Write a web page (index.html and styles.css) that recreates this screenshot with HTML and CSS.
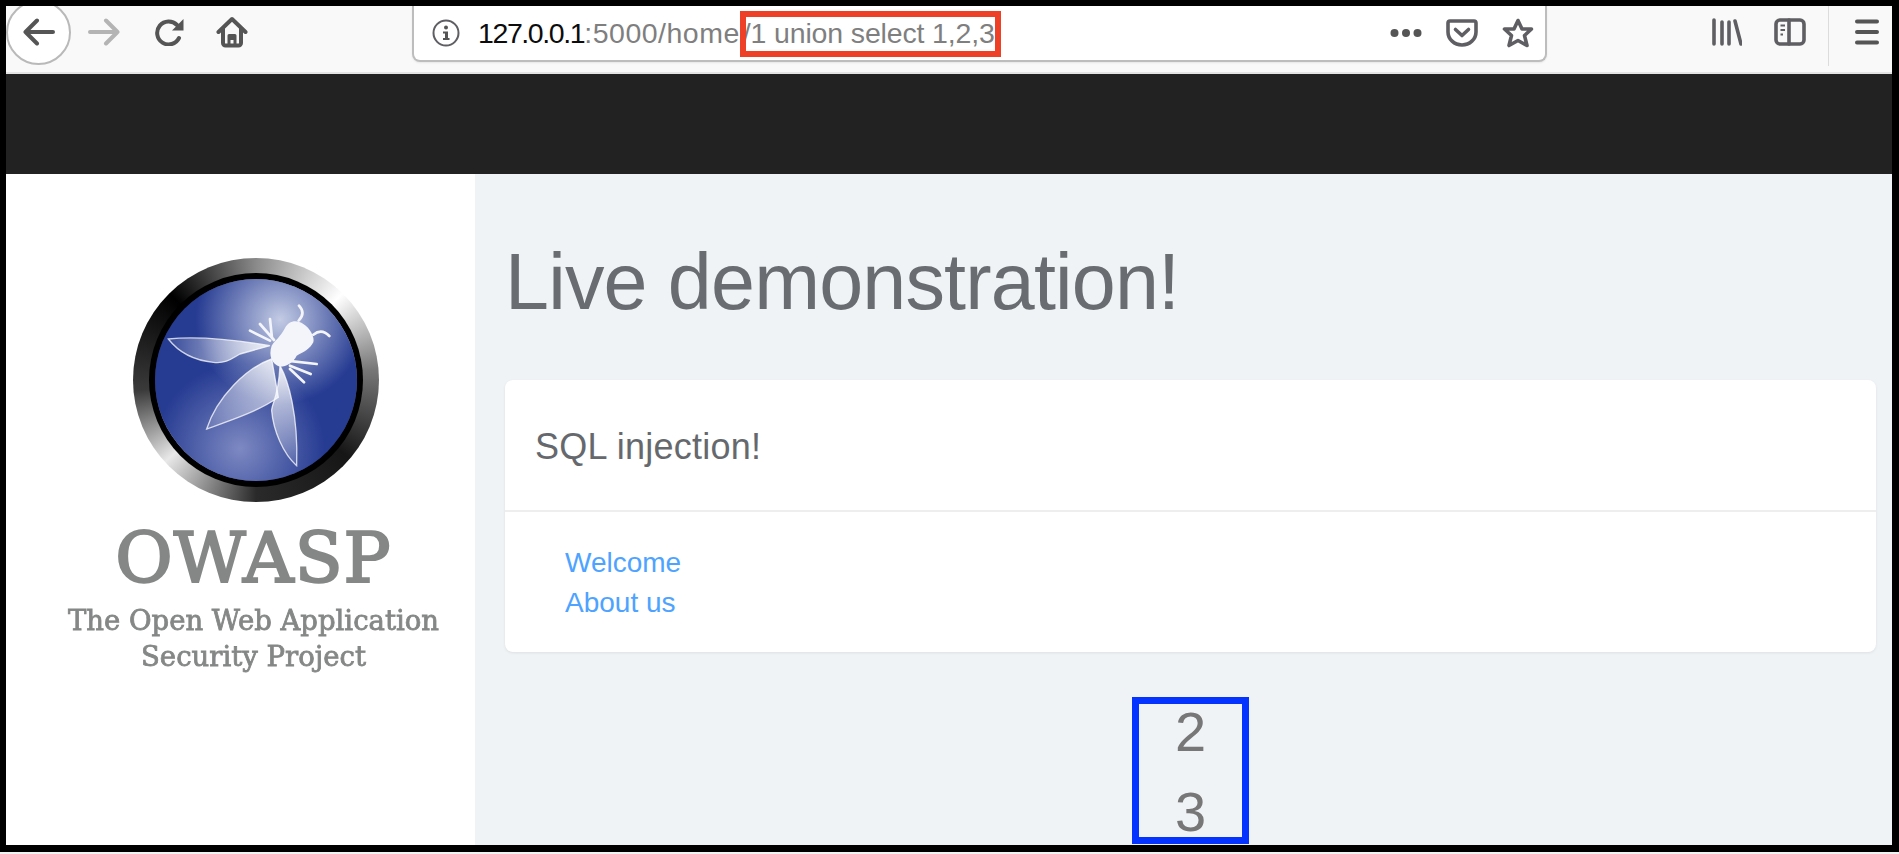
FILE: index.html
```html
<!DOCTYPE html>
<html lang="en">
<head>
	<meta charset="UTF-8">
	<title>Live demonstration!</title>
	<link rel="stylesheet" href="styles.css">
</head>
<body>
	<div class="frame">
		<div class="toolbar">
			<div class="back">
				<svg width="32" height="28" viewBox="0 0 32 28"><path class="ico" d="M2.5 14H30M14 2.5L2.5 14L14 25.5"/></svg>
			</div>
			<svg class="forward" width="32" height="28" viewBox="0 0 32 28"><path class="ico ico-off" d="M29.5 14H2M18 2.5L29.5 14L18 25.5"/></svg>
			<svg class="reload" width="30" height="28" viewBox="0 0 30 28"><path class="ico" d="M23 7A11.5 11.5 0 1 0 25 20"/><path class="solid" d="M29.5 1V12.5H18Z"/></svg>
			<svg class="home" width="32" height="32" viewBox="0 0 32 32"><path class="ico" d="M2.5 16L16 3L29.5 16M7 12V27a2.500 2.500 0 0 0 2.500 2.500H22.500A2.500 2.500 0 0 0 25 27V12"/><path class="solid" d="M11.500 29V19.500a1.500 1.500 0 0 1 1.500-1.500H19a1.500 1.500 0 0 1 1.500 1.500V29H17.500V24H14.500V29Z"/></svg>

			<div class="urlbar">
				<svg class="info" width="28" height="28" viewBox="0 0 28 28"><circle class="thin" cx="14" cy="14" r="12.500"/><circle class="solid" cx="14" cy="8.500" r="2"/><path class="solid" d="M11 12.500H16V19H17.500V21H11V19H13V14.500H11Z"/></svg>
				<div class="address"><span class="host">127.0.0.1</span><span class="path">:5000/home</span><span class="query">/1 union select 1,2,3</span></div>
				<svg class="dots" width="32" height="10" viewBox="0 0 32 10"><circle class="solid" cx="4.500" cy="5" r="4"/><circle class="solid" cx="16" cy="5" r="4"/><circle class="solid" cx="27.500" cy="5" r="4"/></svg>
				<svg class="pocket" width="32" height="28" viewBox="0 0 32 28"><path class="ico ico-thin" d="M4 2H28a2 2 0 0 1 2 2V13A14 13 0 0 1 2 13V4A2 2 0 0 1 4 2Z"/><path class="ico ico-thin" d="M9.500 10.500L16 16.500L22.500 10.500"/></svg>
				<svg class="star" width="32" height="30" viewBox="0 0 32 30"><path class="ico ico-thin" d="M16 2.500L20 11H29.500L22.500 17.500L25 27.500L16 22.500L7 27.500L9.500 17.500L2.500 11H12Z"/></svg>
			</div>

			<svg class="library" width="30" height="28" viewBox="0 0 30 28"><path class="ico ico-thin" d="M2 2V26M10 4V26M17 4V26M23 3L29 26"/></svg>
			<svg class="sidebar-ico" width="32" height="28" viewBox="0 0 32 28"><rect class="thin thick" x="2" y="2" width="28" height="24" rx="4"/><path class="ico ico-thin" d="M15 2V26"/><path class="ico ico-dash" d="M6.500 7.500H11M6.500 12H11M6.500 16.500H9"/></svg>
			<div class="tool-sep"></div>
			<svg class="menu" width="24" height="26" viewBox="0 0 24 26"><path class="ico" d="M2 2.500H22M2 13H22M2 23.500H22"/></svg>
		</div>

		<div class="navbar"></div>

		<div class="page">
			<div class="sidebar">
				<div class="logo">
					<svg width="202" height="202" viewBox="165 115 606 606">
						<defs>
							<radialGradient id="glow1" cx="0.62" cy="0.2" r="0.42">
								<stop offset="0" stop-color="#c3cbe4"/>
								<stop offset="1" stop-color="#c3cbe4" stop-opacity="0"/>
							</radialGradient>
							<radialGradient id="glow2" cx="0.42" cy="0.84" r="0.42">
								<stop offset="0" stop-color="#7d89c2"/>
								<stop offset="1" stop-color="#7d89c2" stop-opacity="0"/>
							</radialGradient>
							<linearGradient id="wing1" x1="0" y1="0" x2="1" y2="0">
								<stop offset="0" stop-color="#fff" stop-opacity="0.08"/>
								<stop offset="1" stop-color="#fff" stop-opacity="0.85"/>
							</linearGradient>
							<linearGradient id="wing2" x1="0" y1="1" x2="1" y2="0">
								<stop offset="0" stop-color="#fff" stop-opacity="0.08"/>
								<stop offset="1" stop-color="#fff" stop-opacity="0.85"/>
							</linearGradient>
							<linearGradient id="wing3" x1="0" y1="1" x2="0" y2="0">
								<stop offset="0" stop-color="#fff" stop-opacity="0.08"/>
								<stop offset="1" stop-color="#fff" stop-opacity="0.9"/>
							</linearGradient>
						</defs>
						<rect x="165" y="115" width="606" height="606" fill="#263b92"/>
						<rect x="165" y="115" width="606" height="606" fill="url(#glow2)"/>
						<rect x="165" y="115" width="606" height="606" fill="url(#glow1)"/>
						<g class="wasp">
							<path class="wing" fill="url(#wing1)" d="M205 295C300 285 420 300 510 315L420 340C400 350 380 370 340 365C290 360 240 340 205 295Z"/>
							<path class="wing" fill="url(#wing2)" d="M515 355C440 380 350 470 320 565C390 540 480 510 535 470Z"/>
							<path class="wing" fill="url(#wing3)" d="M540 375C565 420 595 520 590 675C550 640 520 570 515 510C515 490 535 470 540 375Z"/>
							<path class="body" d="M555 262C565 240 590 235 610 250C630 262 645 290 640 305C630 325 610 335 590 345C580 365 560 378 540 378C515 370 505 345 515 315C525 300 540 290 555 262Z"/>
							<path class="leg" d="M450 270L510 300M480 250L522 298M510 235L516 292M560 360L650 370M570 375L632 400M570 385L612 425M596 240Q618 218 597 195M640 282Q665 262 688 286"/>
						</g>
					</svg>
				</div>
				<div class="brand">OWASP</div>
				<div class="brand-sub">The Open Web Application<br>Security Project</div>
			</div>

			<div class="content">
				<h1 class="title">Live demonstration!</h1>
				<div class="card">
					<div class="card-head">SQL injection!</div>
					<ul class="card-links">
						<li><a href="#">Welcome</a></li>
						<li><a href="#">About us</a></li>
					</ul>
				</div>
				<div class="result">
					<div class="marked">
						<div class="marked-rows">
							<div>2</div>
							<div>3</div>
						</div>
					</div>
				</div>
			</div>
		</div>
	</div>
</body>
</html>
```
FILE: styles.css
```css
* { padding: 0; margin: 0; box-sizing: border-box; }
li { list-style: none; }
a { text-decoration: none; }
svg { display: block; flex: none; }
body { background: #f2f2f2; height: 854px; overflow: hidden; font-family: "Liberation Sans", Arial, sans-serif; }

.frame { height: 852px; border: solid #000; border-width: 6px 7px 7px 6px; display: flex; flex-direction: column; overflow: hidden; background: #fff; }

/* browser toolbar */
.toolbar { height: 68px; flex: none; display: flex; align-items: center; padding-bottom: 14px; background: #f9f9f9; border-bottom: 2px solid #e4e4e4; overflow: hidden; }
.ico { fill: none; stroke: #555; stroke-width: 4; stroke-linecap: round; stroke-linejoin: round; }
.ico-off { stroke: #b4b4b4; }
.ico-thin { stroke-width: 3.600; stroke: #5f5f63; }
.ico-dash { stroke-width: 2; stroke-linecap: butt; stroke: #5f5f63; }
.solid { fill: #555; }
.thin { fill: none; stroke: #5f5f63; stroke-width: 2; }
.thick { stroke-width: 3.600; }
.back { width: 65px; height: 65px; flex: none; display: flex; align-items: center; justify-content: center; background: #fff; border: 2px solid #b9b9b9; border-radius: 50%; }
.forward { margin-left: 17px; }
.reload { margin-left: 34px; }
.home { margin-left: 32px; }

.urlbar { width: 1135px; height: 56px; flex: none; align-self: flex-start; margin-left: 164px; display: flex; align-items: center; padding: 0 11px 0 18px; background: #fff; border: 2px solid #bdbdbd; border-top: none; border-radius: 0 0 8px 8px; box-shadow: 0 1px 2px rgba(0,0,0,.08); }
.info { margin-top: -1px; }
.address { margin-left: 18px; font-size: 28.500px; line-height: 30px; color: #7f7f7f; white-space: nowrap; }
.host { color: #0c0c0d; letter-spacing: -1.400px; }
.path { letter-spacing: .5px; }
.query { position: relative; padding-left: 3px; letter-spacing: -.15px; }
.query:after { content: ""; position: absolute; left: 0; right: -6px; top: -6px; bottom: -8px; border: 6px solid #ee4026; }
.dots { margin-left: auto; margin-top: -1px; }
.pocket { margin-left: 24px; margin-top: -1px; }
.star { margin-left: 24px; margin-top: -1px; }

.library { margin-left: 165px; }
.sidebar-ico { margin-left: 32px; }
.tool-sep { width: 1px; height: 60px; margin: 0 26px 0 22px; background: #dcdcdc; align-self: flex-start; }

.navbar { height: 100px; flex: none; background: #222; }

/* page */
.page { flex: 1; display: flex; min-height: 0; }
.sidebar { width: 469px; flex: none; padding: 84px 0 0 26px; display: flex; flex-direction: column; align-items: center; background: #fff; color: #858787; font-family: "DejaVu Serif", serif; }
.logo { width: 246px; height: 244px; margin-left: 4px; display: flex; align-items: center; justify-content: center; border-radius: 50%; background: conic-gradient(#8a8a8a, #fff 45deg, #777 85deg, #161616 130deg, #2a2a2a 180deg, #e8e8e8 228deg, #3a3a3a 265deg, #000 315deg, #8a8a8a); filter: blur(.6px); }
.logo svg { border-radius: 50%; box-shadow: 0 0 0 6px #000; }
.wing { stroke: #fff; stroke-opacity: .75; stroke-width: 4; }
.body { fill: #f3f5fb; }
.leg { fill: none; stroke: #f3f5fb; stroke-width: 8; stroke-linecap: round; }
.brand { margin-top: 11px; font-size: 70px; line-height: 90px; letter-spacing: 1px; -webkit-text-stroke: 2.200px #858787; filter: blur(.5px); }
.brand-sub { margin-top: -1px; font-size: 27.500px; line-height: 36px; text-align: center; white-space: nowrap; -webkit-text-stroke: .8px #858787; filter: blur(.5px); }

.content { flex: 1; min-width: 0; padding: 0 16px 0 30px; background: #eff3f6; }
.title { height: 206px; padding-top: 58px; font-size: 79px; line-height: 100px; font-weight: normal; letter-spacing: -.800px; color: #696d71; white-space: nowrap; }
.card { background: #fff; border-radius: 8px; box-shadow: 0 1px 3px rgba(0,0,0,.08); }
.card-head { height: 132px; padding: 45px 30px 0; border-bottom: 2px solid #eee; font-size: 36px; line-height: 44px; letter-spacing: .25px; color: #65696d; }
.card-links { height: 140px; padding: 31px 30px 0 60px; font-size: 28px; line-height: 40px; }
.card-links a { color: #4da3ff; }

.result { margin-top: 45px; display: flex; justify-content: center; }
.marked { width: 117px; height: 147px; border: 7px solid #0433ff; text-align: center; font-size: 56px; line-height: 80px; color: #777; }
.marked-rows { margin-top: -12px; }
```
